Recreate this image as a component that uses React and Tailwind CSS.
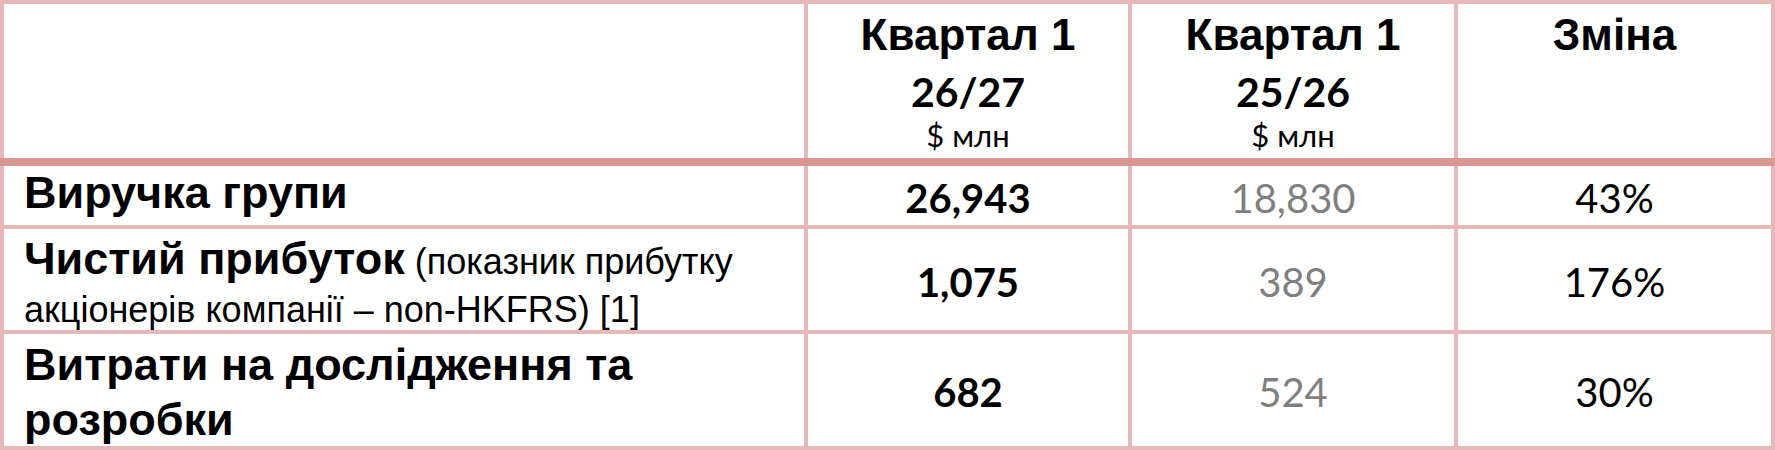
import React from 'react'

const cols = 'grid grid-cols-[800px_320px_322px_313px]'

const HeadCell = ({ top, mid, unit }) => (
  <div className="bg-white flex flex-col items-center pt-[2px]">
    <div className="font-['Liberation_Sans',sans-serif] font-bold text-[44px] leading-[57px]">{top}</div>
    {mid && <div className="font-['Lato',sans-serif] font-bold text-[41px] leading-[57px]">{mid}</div>}
    {unit && <div className="font-['Lato',sans-serif] text-[31px] leading-[30px]">{unit}</div>}
  </div>
)

const Num = ({ children, className = '' }) => (
  <div className={`bg-white flex items-center justify-center pt-[4px] font-['Lato',sans-serif] text-[40px] leading-none ${className}`}>
    {children}
  </div>
)

const rows = [
  { a: '26,943', b: '18,830', c: '43%' },
  { a: '1,075', b: '389', c: '176%' },
  { a: '682', b: '524', c: '30%' },
]

export default function App() {
  const labels = [
    <div key="l0" className="bg-white pl-[20px] pt-[1px] font-['Liberation_Sans',sans-serif] font-bold text-[45px] leading-[52px]">
      Виручка групи
    </div>,
    <div key="l1" className="bg-white pl-[20px] pt-[9px] font-['Liberation_Sans',sans-serif] text-[36px] leading-[48px]">
      <span className="font-bold text-[45px] leading-[40px]">Чистий прибуток</span> (показник прибутку
      <br />
      акціонерів компанії – non-HKFRS) [1]
    </div>,
    <div key="l2" className="bg-white pl-[20px] pt-[3px] font-['Liberation_Sans',sans-serif] font-bold text-[45px] leading-[55px]">
      Витрати на дослідження та
      <br />
      розробки
    </div>,
  ]

  return (
    <div className="w-[1775px] h-[450px] bg-[#e6b9b8] flex flex-col text-black">
      <div className={`${cols} gap-x-[4px] px-[4px] pt-[4px] h-[158px]`}>
        <div className="bg-white" />
        <HeadCell top="Квартал 1" mid="26/27" unit="$ млн" />
        <HeadCell top="Квартал 1" mid="25/26" unit="$ млн" />
        <HeadCell top="Зміна" />
      </div>
      <div className="h-[8px] bg-[#d99694]" />
      <div className={`${cols} grid-rows-[59px_101px_112px] gap-[4px] px-[4px] pb-[4px]`}>
        {rows.map((r, i) => (
          <React.Fragment key={i}>
            {labels[i]}
            <Num className="font-bold">{r.a}</Num>
            <Num className="text-[#7f7f7f]">{r.b}</Num>
            <Num>{r.c}</Num>
          </React.Fragment>
        ))}
      </div>
    </div>
  )
}
